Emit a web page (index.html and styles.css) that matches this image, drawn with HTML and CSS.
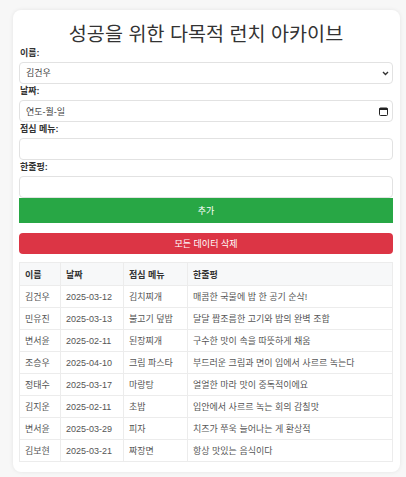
FILE: index.html
```html
<!DOCTYPE html>
<html lang="ko">
<head>
<meta charset="utf-8">
<title>성공을 위한 다목적 런치 아카이브</title>
<link rel="stylesheet" href="styles.css">
</head>
<body>
<div class="card">
  <h1 class="title">성공을 위한 다목적 런치 아카이브</h1>
  <form class="form">
    <label class="label" for="name">이름:</label>
    <div class="select-wrap">
      <select id="name" class="control select">
        <option>김건우</option>
      </select>
      <svg class="chev" width="7" height="5" viewBox="0 0 7 5"><path d="M1 1 L3.5 3.5 L6 1" fill="none" stroke="#333" stroke-width="1.4"/></svg>
    </div>
    <label class="label">날짜:</label>
    <div class="control date">
      <span>연도-월-일</span>
      <svg width="9" height="9" viewBox="0 0 9 9"><rect x="0.5" y="1" width="8" height="7.5" rx="1" fill="none" stroke="#222" stroke-width="1"/><rect x="0.5" y="1" width="8" height="2" fill="#222"/></svg>
    </div>
    <label class="label" for="menu">점심 메뉴:</label>
    <input id="menu" class="control" type="text">
    <label class="label" for="review">한줄평:</label>
    <input id="review" class="control" type="text">
    <button type="button" class="btn btn-add">추가</button>
    <button type="button" class="btn btn-del">모든 데이터 삭제</button>
  </form>
  <table class="table">
    <colgroup>
      <col class="c1"><col class="c2"><col class="c3"><col class="c4">
    </colgroup>
    <thead>
      <tr><th>이름</th><th>날짜</th><th>점심 메뉴</th><th>한줄평</th></tr>
    </thead>
    <tbody>
      <tr><td>김건우</td><td>2025-03-12</td><td>김치찌개</td><td>매콤한 국물에 밥 한 공기 순삭!</td></tr>
      <tr><td>민유진</td><td>2025-03-13</td><td>불고기 덮밥</td><td>달달 짭조름한 고기와 밥의 완벽 조합</td></tr>
      <tr><td>변서윤</td><td>2025-02-11</td><td>된장찌개</td><td>구수한 맛이 속을 따뜻하게 채움</td></tr>
      <tr><td>조승우</td><td>2025-04-10</td><td>크림 파스타</td><td>부드러운 크림과 면이 입에서 사르르 녹는다</td></tr>
      <tr><td>정태수</td><td>2025-03-17</td><td>마랑탕</td><td>얼얼한 마라 맛이 중독적이에요</td></tr>
      <tr><td>김지운</td><td>2025-02-11</td><td>초밥</td><td>입안에서 사르르 녹는 회의 감칠맛</td></tr>
      <tr><td>변서윤</td><td>2025-03-29</td><td>피자</td><td>치즈가 쭈욱 늘어나는 게 환상적</td></tr>
      <tr><td>김보현</td><td>2025-03-21</td><td>짜장면</td><td>항상 맛있는 음식이다</td></tr>
    </tbody>
  </table>
</div>
</body>
</html>
```
FILE: styles.css
```css
* { box-sizing: border-box; }
html, body { margin: 0; }
body {
  background: #f7f7f7;
  font-family: "Liberation Sans", "Noto Sans CJK KR", sans-serif;
  color: #333;
  padding: 10px 6px 0 13px;
  height: 477px;
  overflow: hidden;
}
.card {
  background: #fff;
  border-radius: 8px;
  box-shadow: 0 0 4px rgba(0,0,0,0.08);
  padding: 9px 7px 11px 6px;
  height: 462px;
}
.title {
  margin: 0;
  font-weight: normal;
  font-size: 19.6px;
  line-height: 27px;
  text-align: center;
  color: #333;
  font-family: "Noto Sans CJK KR", sans-serif;
}
.form { display: flex; flex-direction: column; }
.label {
  display: block;
  font-size: 9px;
  font-weight: bold;
  line-height: 14px;
  margin-bottom: 2px;
  padding-left: 1px;
  color: #333;
}
.control {
  display: block;
  width: 100%;
  height: 22px;
  border: 1px solid #e2e2e2;
  border-radius: 4px;
  background: #fff;
  font-family: inherit;
  font-size: 9px;
  color: #444;
  padding: 0 6px;
  margin: 0;
  outline: none;
}
.select-wrap { position: relative; }
.select { appearance: none; -webkit-appearance: none; }
.chev { position: absolute; right: 4px; top: 9px; }
.date {
  display: flex;
  align-items: center;
  justify-content: space-between;
  padding-right: 4px;
}
.btn {
  display: block;
  width: 100%;
  border: none;
  color: #fff;
  font-family: inherit;
  font-size: 9px;
  margin: 0;
  padding: 0;
}
.btn-add {
  background: #28a745;
  height: 25px;
  border-radius: 0;
}
.btn-del {
  background: #dc3545;
  height: 21px;
  border-radius: 4px;
  margin-top: 10px;
}
.table {
  margin-top: 8px;
  width: 100%;
  border-collapse: collapse;
  table-layout: fixed;
  font-size: 9px;
}
.c1 { width: 41px; }
.c2 { width: 63px; }
.c3 { width: 64px; }
.table th, .table td {
  border: 1px solid #ececec;
  text-align: left;
  padding: 0 5px;
  white-space: nowrap;
  overflow: hidden;
}
.table th {
  background: #f7f8f9;
  height: 23px;
  font-weight: bold;
  color: #333;
}
.table td {
  height: 22px;
  color: #555;
}
```
